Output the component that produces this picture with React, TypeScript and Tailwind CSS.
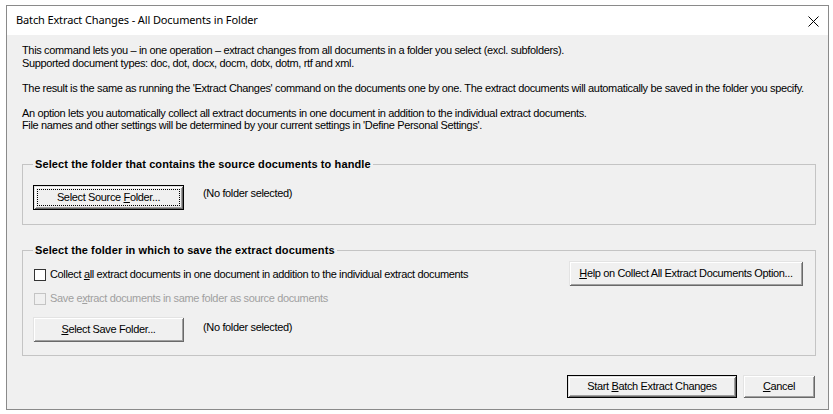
import React from "react";

const font = "font-['Liberation_Sans',Arial,sans-serif]";
const btn3d =
  "shadow-[inset_1px_1px_#e3e3e3,inset_-1px_-1px_#696969,inset_2px_2px_#ffffff,inset_-2px_-2px_#a0a0a0]";

function Btn({
  w,
  h,
  def,
  focus,
  children,
}: {
  w: string;
  h: string;
  def?: boolean;
  focus?: boolean;
  children: React.ReactNode;
}) {
  return (
    <div
      className={`${w} ${h} shrink-0 bg-[#f0f0f0] text-[11px] leading-[13px] text-black ${
        def ? "border border-black" : ""
      } flex`}
    >
      <div className={`flex-1 flex p-[3px] ${btn3d}`}>
        <div
          className={`flex-1 flex items-center justify-center ${
            focus ? "border border-dotted border-black" : ""
          }`}
        >
          <span className="whitespace-nowrap">{children}</span>
        </div>
      </div>
    </div>
  );
}

function Check({ disabled, children }: { disabled?: boolean; children: React.ReactNode }) {
  return (
    <div className="flex items-center gap-[4px] text-[11px] leading-[13px]">
      <div
        className={`ml-[1px] w-[12px] h-[12px] border ${
          disabled ? "border-[#c4c4c4] bg-[#f0f0f0]" : "border-[#333333] bg-white"
        }`}
      />
      <span className={disabled ? "text-[#a0a0a0]" : "text-black"}>{children}</span>
    </div>
  );
}

export default function App() {
  return (
    <div className={`w-[833px] h-[414px] bg-white overflow-hidden ${font}`}>
      <div className="ml-[6px] mt-[5px] w-[823px] h-[405px] border border-[#8a8a8a] flex flex-col">
        <div className="h-[29px] bg-white flex items-center justify-between pl-[9px] pr-[9px]">
          <span className="font-['Noto_Sans',sans-serif] text-[11px] tracking-[-0.13px] text-black">
            Batch Extract Changes - All Documents in Folder
          </span>
          <svg width="11" height="11" viewBox="0 0 11 11" className="mt-[1px]">
            <path d="M0.5 0.5 L10.5 10.5 M10.5 0.5 L0.5 10.5" stroke="#000" strokeWidth="1" fill="none" />
          </svg>
        </div>
        <div className="flex-1 bg-[#f0f0f0] pl-[15px] pr-[12px] flex flex-col text-black tracking-[-0.35px]">
          <div className="pt-[9px] h-[97px] text-[11px] leading-[12.5px]">
            <div>
              This command lets you – in one operation – extract changes from all documents in a folder you select (excl.
              subfolders).
            </div>
            <div>Supported document types: doc, dot, docx, docm, dotx, dotm, rtf and xml.</div>
            <div className="h-[12.5px]" />
            <div>
              The result is the same as running the 'Extract Changes' command on the documents one by one. The extract
              documents will automatically be saved in the folder you specify.
            </div>
            <div className="h-[12.5px]" />
            <div>
              An option lets you automatically collect all extract documents in one document in addition to the
              individual extract documents.
            </div>
            <div>File names and other settings will be determined by your current settings in 'Define Personal Settings'.</div>
          </div>

          <fieldset className="mt-[25px] border border-[#c4c4c4] pl-[10px] pr-[12px] pt-[14px] pb-[14px]">
            <legend className="px-[2px] text-[11px] leading-[14px] font-bold tracking-[0.1px]">
              Select the folder that contains the source documents to handle
            </legend>
            <div className="flex items-start">
              <Btn w="w-[151px]" h="h-[25px]" def focus>
                Select Source <span className="underline">F</span>older...
              </Btn>
              <span className="ml-[19px] mt-[2px] text-[11px] leading-[13px]">(No folder selected)</span>
            </div>
          </fieldset>

          <fieldset className="mt-[18px] border border-[#c4c4c4] pl-[10px] pr-[12px] pt-[4px] pb-[13px]">
            <legend className="px-[2px] text-[11px] leading-[14px] font-bold tracking-[0.1px]">
              Select the folder in which to save the extract documents
            </legend>
            <div className="flex items-start justify-between">
              <div className="mt-[7px]">
                <Check>
                  Collect <span className="underline">a</span>ll extract documents in one document in addition to the
                  individual extract documents
                </Check>
              </div>
              <Btn w="w-[234px]" h="h-[25px]">
                <span className="underline">H</span>elp on Collect All Extract Documents Option...
              </Btn>
            </div>
            <div className="mt-[6px]">
              <Check disabled>
                Save e<span className="underline">x</span>tract documents in same folder as source documents
              </Check>
            </div>
            <div className="mt-[12px] flex items-start">
              <Btn w="w-[151px]" h="h-[25px]">
                <span className="underline">S</span>elect Save Folder...
              </Btn>
              <span className="ml-[19px] mt-[4px] text-[11px] leading-[13px]">(No folder selected)</span>
            </div>
          </fieldset>

          <div className="mt-[19px] flex justify-end gap-[6px] pr-[1px]">
            <Btn w="w-[170px]" h="h-[23px]" def>
              Start <span className="underline">B</span>atch Extract Changes
            </Btn>
            <Btn w="w-[72px]" h="h-[23px]">
              <span className="underline">C</span>ancel
            </Btn>
          </div>
        </div>
      </div>
    </div>
  );
}
